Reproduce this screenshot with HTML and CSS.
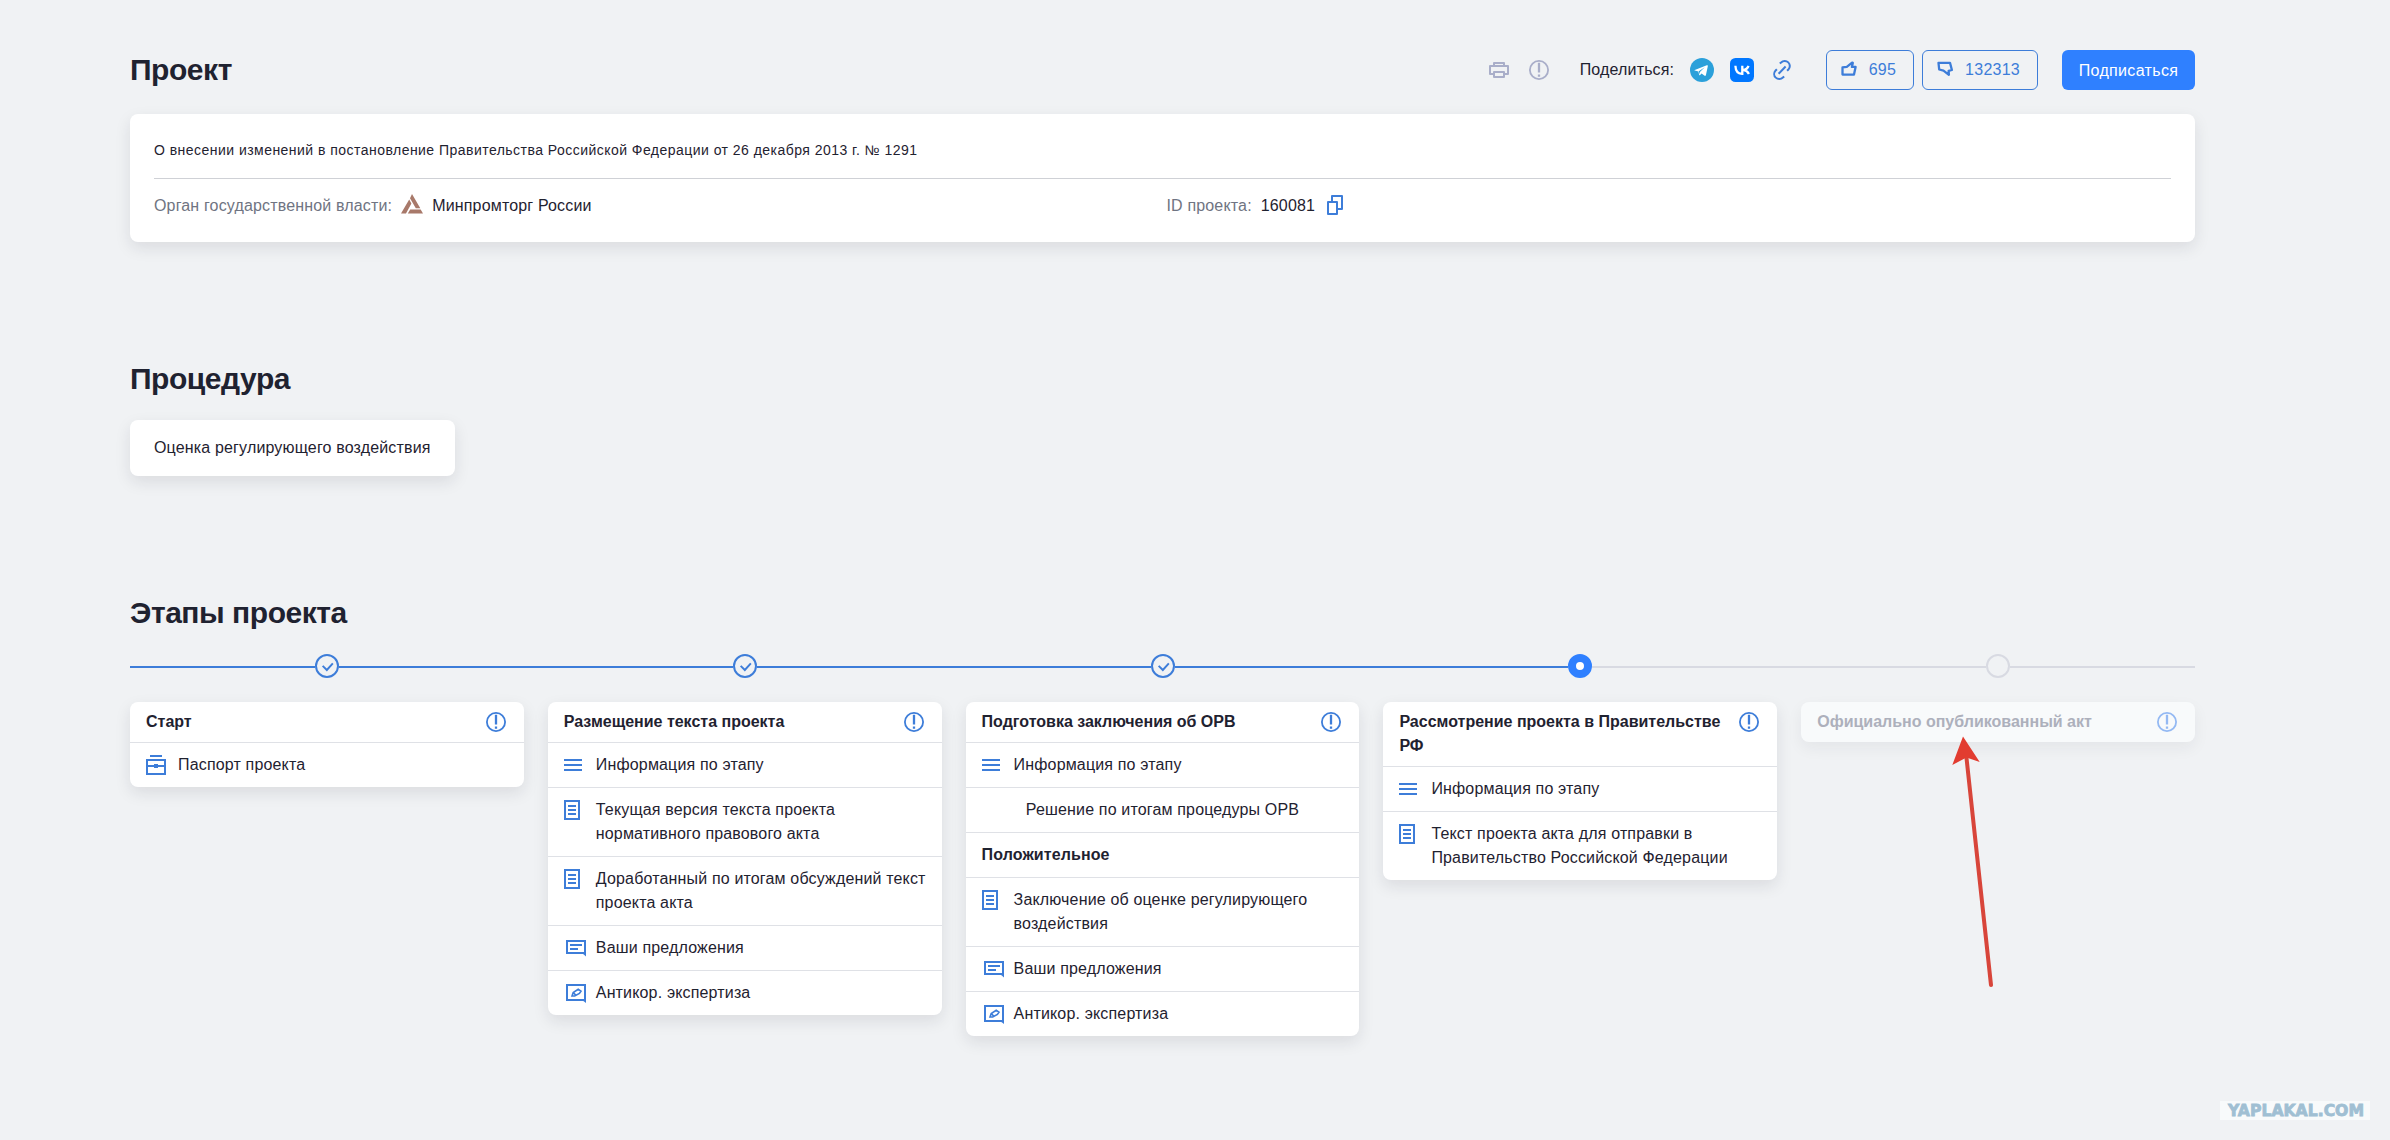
FILE: index.html
```html
<!DOCTYPE html>
<html lang="ru">
<head>
<meta charset="UTF-8">
<title>Проект</title>
<link rel="stylesheet" href="styles.css">
</head>
<body>

<!-- icon sprite -->
<svg class="sprite" aria-hidden="true">
  <symbol id="i-info" viewBox="0 0 24 24">
    <circle cx="12" cy="12" r="9.1" fill="none" stroke="currentColor" stroke-width="1.8"/>
    <path d="M12 4.700v9.700M12 16.400v2.400" fill="none" stroke="currentColor" stroke-width="2.300"/>
  </symbol>
  <symbol id="i-print" viewBox="0 0 24 24">
    <path d="M7 8V5h10v3M6.500 16H3V8h18v8h-3.500M7 14h10v5H7z" fill="none" stroke="currentColor" stroke-width="2" stroke-linejoin="round"/>
  </symbol>
  <symbol id="i-menu" viewBox="0 0 24 24">
    <path d="M0 7h18M0 12h18M0 17h18" fill="none" stroke="currentColor" stroke-width="2"/>
  </symbol>
  <symbol id="i-doc" viewBox="0 0 24 24">
    <path d="M1 3h14v18H1zM4 8h8M4 12h8M4 16h8" fill="none" stroke="currentColor" stroke-width="2"/>
  </symbol>
  <symbol id="i-chat" viewBox="0 0 24 24">
    <path d="M3 5h18v12H3zM6 9h12M6 13h8" fill="none" stroke="currentColor" stroke-width="2"/>
    <path d="M18 17h4v3.500z" fill="currentColor"/>
  </symbol>
  <symbol id="i-edit" viewBox="0 0 24 24">
    <path d="M3 4h18v15H3z" fill="none" stroke="currentColor" stroke-width="2"/>
    <path d="M18 19h4v3z" fill="currentColor"/>
    <path d="M8 15l1.200-3.500 5-3.200 2.800 1.900-1.600 2.300-4.700 2.500zM9.500 11.700l2.200 2.400" fill="none" stroke="currentColor" stroke-width="1.600"/>
  </symbol>
  <symbol id="i-case" viewBox="0 0 24 24">
    <path d="M4 3h12M1 7h18v14H1zM1 13h18" fill="none" stroke="currentColor" stroke-width="2"/>
    <path d="M8 11h4v4H8z" fill="currentColor"/>
  </symbol>
  <symbol id="i-copy" viewBox="0 0 24 24">
    <path d="M5 9h9v12H5zM9 9V3h10v13h-5" fill="none" stroke="currentColor" stroke-width="2" stroke-linejoin="round"/>
  </symbol>
  <symbol id="i-link" viewBox="0 0 24 24">
    <path d="M9.800 5.600l1.300-1.100a4.900 4.900 0 0 1 7.300 7l-1.300 1.300M14.200 18.400l-1.300 1.100a4.900 4.900 0 0 1-7.300-7l1.300-1.300M8.600 15.700l7-7.200" fill="none" stroke="currentColor" stroke-width="2"/>
  </symbol>
  <symbol id="i-like" viewBox="0 0 16 16">
    <path d="M1.500 6.400l4.300-.5 5.300-4.300.7.300-.9 4h3.700L13 13.600H1.500z" fill="none" stroke="currentColor" stroke-width="2.300" stroke-linejoin="round"/>
  </symbol>
  <symbol id="i-dislike" viewBox="0 0 16 16">
    <path d="M1.500 1.800H13l1.900 7.200-3.300.8.300 4-5.400-4.200-4.300-1.100z" fill="none" stroke="currentColor" stroke-width="2.300" stroke-linejoin="round"/>
  </symbol>
  <symbol id="i-check" viewBox="0 0 24 24">
    <path d="M6.800 11.800l5 5 7.200-8" fill="none" stroke="currentColor" stroke-width="2.300"/>
  </symbol>
</svg>

<main class="page">
  <header class="top">
    <h1 class="title">Проект</h1>
    <div class="actions">
      <svg class="icon muted"><use href="#i-print"/></svg>
      <svg class="icon muted"><use href="#i-info"/></svg>
      <span class="share-label">Поделиться:</span>
      <svg class="icon" viewBox="0 0 24 24">
        <circle cx="12" cy="12" r="12" fill="#2ba0da"/>
        <path d="M4.800 12l12-4.800c.7-.2 1.200.2 1 1l-1.900 9c-.2.700-.7.800-1.300.500l-3-2.200-1.500 1.400c-.5.500-.9.300-1-.3l-.7-3.100-3.500-1c-.5-.1-.5-.4-.1-.5z" fill="#fff"/>
        <path d="M8.800 13.300l6-4-4.900 4.700-.5 2.500z" fill="#2ba0da"/>
      </svg>
      <svg class="icon" viewBox="0 0 24 24">
        <rect width="24" height="24" rx="5.500" fill="#0077ff"/>
        <path d="M5.400 7.800c.2 5 2.600 8 6.500 8h.4V7.800M18.500 7.800c-.7 2.200-2.500 3.900-5.500 4.100 3.100.3 4.900 1.900 5.900 4" fill="none" stroke="#fff" stroke-width="2.300"/>
      </svg>
      <svg class="icon blue"><use href="#i-link"/></svg>
      <div class="votes">
        <button class="vote"><svg class="icon-sm"><use href="#i-like"/></svg>695</button>
        <button class="vote"><svg class="icon-sm"><use href="#i-dislike"/></svg>132313</button>
      </div>
      <button class="subscribe">Подписаться</button>
    </div>
  </header>

  <section class="card project">
    <p class="project-name">О внесении изменений в постановление Правительства Российской Федерации от 26 декабря 2013 г. № 1291</p>
    <div class="project-meta">
      <div class="meta">
        <span class="meta-label">Орган государственной власти:</span>
        <svg class="agency" viewBox="0 0 22 20">
          <path d="M11 0l8.300 14.300h-4.500L9 4.200zM8.200 5.500l2.200 3.900L5 19.500H0zM9.200 15.500h10.500L22 19.500H6.800z" fill="#a8796a"/>
        </svg>
        <span>Минпромторг России</span>
      </div>
      <div class="meta">
        <span class="meta-label">ID проекта:</span>
        <span>160081</span>
        <svg class="icon blue copy"><use href="#i-copy"/></svg>
      </div>
    </div>
  </section>

  <h2 class="title procedure-title">Процедура</h2>
  <div class="card procedure">Оценка регулирующего воздействия</div>

  <h2 class="title stages-title">Этапы проекта</h2>

  <div class="timeline">
    <div class="step done"><i class="line"></i><span class="dot"><svg class="tick"><use href="#i-check"/></svg></span><i class="line"></i></div>
    <div class="step done"><i class="line"></i><span class="dot"><svg class="tick"><use href="#i-check"/></svg></span><i class="line"></i></div>
    <div class="step done"><i class="line"></i><span class="dot"><svg class="tick"><use href="#i-check"/></svg></span><i class="line"></i></div>
    <div class="step current"><i class="line"></i><span class="dot"></span><i class="line"></i></div>
    <div class="step"><i class="line"></i><span class="dot"></span><i class="line"></i></div>
  </div>

  <div class="stages">
    <article class="card stage">
      <div class="stage-head"><h3>Старт</h3><svg class="icon blue"><use href="#i-info"/></svg></div>
      <div class="row"><svg class="icon blue"><use href="#i-case"/></svg><span>Паспорт проекта</span></div>
    </article>

    <article class="card stage">
      <div class="stage-head"><h3>Размещение текста проекта</h3><svg class="icon blue"><use href="#i-info"/></svg></div>
      <div class="row"><svg class="icon blue"><use href="#i-menu"/></svg><span>Информация по этапу</span></div>
      <div class="row"><svg class="icon blue"><use href="#i-doc"/></svg><span>Текущая версия текста проекта нормативного правового акта</span></div>
      <div class="row"><svg class="icon blue"><use href="#i-doc"/></svg><span>Доработанный по итогам обсуждений текст проекта акта</span></div>
      <div class="row"><svg class="icon blue"><use href="#i-chat"/></svg><span>Ваши предложения</span></div>
      <div class="row"><svg class="icon blue"><use href="#i-edit"/></svg><span>Антикор. экспертиза</span></div>
    </article>

    <article class="card stage">
      <div class="stage-head"><h3>Подготовка заключения об ОРВ</h3><svg class="icon blue"><use href="#i-info"/></svg></div>
      <div class="row"><svg class="icon blue"><use href="#i-menu"/></svg><span>Информация по этапу</span></div>
      <div class="row centered"><span>Решение по итогам процедуры ОРВ</span></div>
      <div class="row verdict"><span>Положительное</span></div>
      <div class="row"><svg class="icon blue"><use href="#i-doc"/></svg><span>Заключение об оценке регулирующего воздействия</span></div>
      <div class="row"><svg class="icon blue"><use href="#i-chat"/></svg><span>Ваши предложения</span></div>
      <div class="row"><svg class="icon blue"><use href="#i-edit"/></svg><span>Антикор. экспертиза</span></div>
    </article>

    <article class="card stage">
      <div class="stage-head"><h3>Рассмотрение проекта в Правительстве РФ</h3><svg class="icon blue"><use href="#i-info"/></svg></div>
      <div class="row"><svg class="icon blue"><use href="#i-menu"/></svg><span>Информация по этапу</span></div>
      <div class="row"><svg class="icon blue"><use href="#i-doc"/></svg><span>Текст проекта акта для отправки в Правительство Российской Федерации</span></div>
    </article>

    <article class="card stage disabled">
      <div class="stage-head"><h3>Официально опубликованный акт</h3><svg class="icon"><use href="#i-info"/></svg></div>
    </article>
  </div>
</main>

<svg class="arrow" viewBox="0 0 44 256">
  <path d="M16.500 22L41 249" stroke="#d8453a" stroke-width="4" stroke-linecap="round"/>
  <path d="M13 .5L29.700 26 16.500 21.500 2.300 29z" fill="#e23c30"/>
</svg>

<div class="watermark">
  <svg viewBox="0 0 150 19"><text x="8" y="15" textLength="136" lengthAdjust="spacingAndGlyphs">YAPLAKAL.COM</text></svg>
</div>

</body>
</html>
```

FILE: styles.css
```css
:root{
  --bg: #f0f2f4;
  --text: #1f2230;
  --text-dim: #6f7482;
  --blue: #3d7dd9;
  --blue-solid: #2f80ff;
  --muted: #a9aec9;
  --line: #dfe1e6;
}
*{ box-sizing: border-box; }
html,body{ margin: 0; padding: 0; }
body{
  height: 1140px; overflow: hidden; position: relative;
  background: var(--bg); color: var(--text);
  font: 16px/24px "Liberation Sans", Arial, sans-serif;
  letter-spacing: .16px;
}
h1,h2,h3,p{ margin: 0; }
button{ font: inherit; cursor: pointer; }
.sprite{ display: none; }

.page{ padding: 50px 195px 0 130px; }
.title{ font-size: 30px; line-height: 40px; font-weight: 700; letter-spacing: -.45px; }

.icon{ width: 24px; height: 24px; flex-shrink: 0; display: block; }
.icon-sm{ width: 16px; height: 16px; flex-shrink: 0; }
.blue{ color: var(--blue); }
.muted{ color: var(--muted); }

.card{
  background: #fff; border-radius: 8px;
  box-shadow: 0 6px 16px rgba(30,34,48,.1);
}

/* header */
.top{ display: flex; justify-content: space-between; height: 40px; }
.actions{ display: flex; align-items: center; gap: 16px; }
.share-label{ margin-left: 13px; width: 94px; white-space: nowrap; }
.votes{ display: flex; gap: 8px; margin-left: 16px; }
.vote{
  display: flex; align-items: center; gap: 12px; height: 40px;
  padding: 0 17px 0 14px; color: var(--blue); background: transparent;
  border: 1px solid var(--blue); border-radius: 6px; letter-spacing: .25px;
}
.vote .icon-sm{ margin-top: -2px; }
.subscribe{
  width: 133px; height: 40px; margin-left: 8px; padding: 2px 0 0;
  border: 0; border-radius: 6px; background: var(--blue-solid); color: #fff;
  letter-spacing: .35px;
}

/* project card */
.project{ height: 128px; margin-top: 24px; padding: 24px; }
.project-name{
  height: 41px; border-bottom: 1px solid #cfd1d6;
  font-size: 14px; letter-spacing: .465px;
}
.project-meta{ display: grid; grid-template-columns: 1fr 1fr; gap: 8px; padding-top: 15px; }
.meta{ display: flex; align-items: center; gap: 9px; }
.meta-label{ color: var(--text-dim); }
.agency{ width: 22px; height: 20px; margin-top: -5px; }
.copy{ margin: -2px 0 0 -1px; }

/* procedure */
.procedure-title{ margin: 117px 0 21px; }
.procedure{ width: fit-content; padding: 16px 24px; }

/* stages */
.stages-title{ margin: 117px 0 21px; }
.timeline,.stages{ display: grid; grid-template-columns: repeat(5, 1fr); gap: 24px; }
.stages{ margin-top: 24px; align-items: start; }
.step{ display: flex; align-items: center; }
.line{ flex: 1; height: 2px; margin-top: 2px; background: #d8dae2; }
.step:not(:last-child) .line:last-child{ position: relative; }
.step:not(:last-child) .line:last-child::after{
  content: ""; position: absolute; left: 100%; top: 0;
  width: 24px; height: 2px; background: inherit;
}
.dot{
  width: 24px; height: 24px; border: 2px solid #d8dae2; border-radius: 50%;
  color: var(--blue);
}
.tick{ display: block; width: 20px; height: 20px; }
.done .line,.current .line:first-child{ background: var(--blue); }
.done .dot{ border-color: var(--blue); }
.current .dot{ border: 8px solid var(--blue-solid); background: #fff; }

.stage-head{ display: flex; justify-content: space-between; gap: 8px; padding: 8px 16px; }
.stage-head h3{ font-size: 16px; font-weight: 700; letter-spacing: 0; }
.row{ display: flex; gap: 8px; padding: 10px 16px; border-top: 1px solid var(--line); }
.centered{ justify-content: center; }
.verdict{ font-weight: 700; letter-spacing: .1px; }
.disabled{ background: #f8fafb; box-shadow: 0 6px 16px rgba(30,34,48,.06); color: #adb0bc; }
.disabled .icon{ color: #94b9f3; }

.arrow{ position: absolute; left: 1950px; top: 736px; width: 44px; height: 256px; fill: none; }

.watermark{ position: absolute; right: 20px; bottom: 20px; width: 150px; height: 19px; background: #f8fafb; }
.watermark svg{ display: block; width: 150px; height: 19px; }
.watermark text{
  font: 700 15px "DejaVu Sans", sans-serif; fill: #a0bfd3; letter-spacing: 0;
  stroke: #a0bfd3; stroke-width: .8px;
}
```
